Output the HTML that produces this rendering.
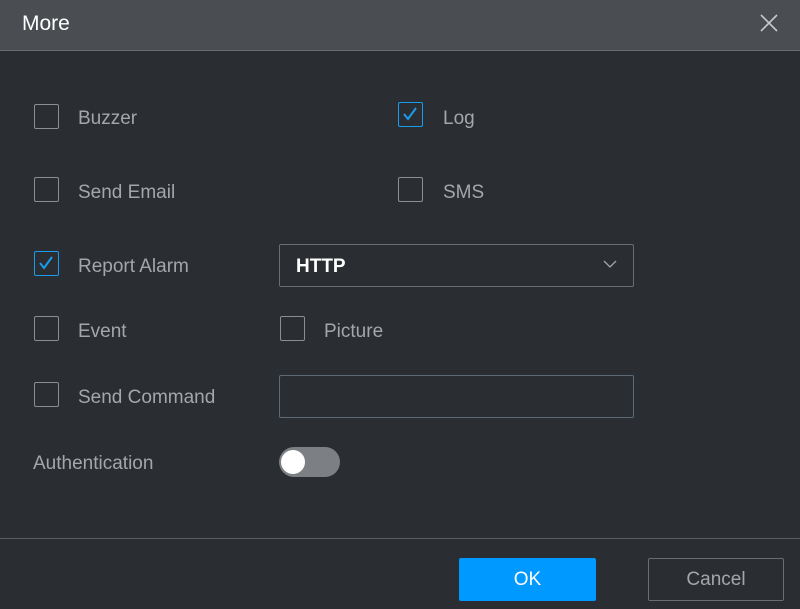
<!DOCTYPE html>
<html><head><style>
*{margin:0;padding:0;box-sizing:border-box}
body{width:800px;height:609px;background:#2a2d32;font-family:"Liberation Sans",sans-serif;position:relative;overflow:hidden;color:#a3a6aa}
.hdr{position:absolute;left:0;top:0;width:800px;height:51px;background:#4a4d52;border-bottom:1px solid #6a6d72}
.hdr .t{position:absolute;left:22px;top:12px;font-size:21px;color:#fff}
.cb{position:absolute;width:25px;height:25px;border:1.5px solid #8a8d92;border-radius:2px}
.cb.on{border-color:#1a9cec}
.cb.on svg{position:absolute;left:3px;top:3px}
.l{position:absolute;font-size:19px;line-height:20px;margin-top:1px}
.box{position:absolute;left:279px;width:355px;height:43px;border:1px solid #6a6d72;border-radius:2px}
.sw{position:absolute;left:279px;top:447px;width:61px;height:30px;border-radius:15px;background:#7c8084}
.sw i{position:absolute;left:2px;top:3px;width:24px;height:24px;border-radius:50%;background:#fff}
.line{position:absolute;left:0;top:538px;width:800px;height:1px;background:#5a5d62}
.btn{position:absolute;top:558px;height:43px;font-size:19px;text-align:center;line-height:43px;border-radius:2px}
</style></head><body>
<div class="hdr"><div class="t">More</div>
<svg style="position:absolute;left:759px;top:13px" width="20" height="20" viewBox="0 0 20 20"><path d="M2 2L18 18M18 2L2 18" stroke="#c8cacd" stroke-width="1.6"/></svg></div>

<div class="cb" style="left:34px;top:104px"></div><div class="l" style="left:78px;top:108px">Buzzer</div>
<div class="cb on" style="left:398px;top:102px"><svg width="16" height="16" viewBox="0 0 16 16"><path d="M2 8L6 13L14 2" fill="none" stroke="#1a9cec" stroke-width="2"/></svg></div><div class="l" style="left:443px;top:108px">Log</div>

<div class="cb" style="left:34px;top:177px"></div><div class="l" style="left:78px;top:182px">Send Email</div>
<div class="cb" style="left:398px;top:177px"></div><div class="l" style="left:443px;top:182px">SMS</div>

<div class="cb on" style="left:34px;top:251px"><svg width="16" height="16" viewBox="0 0 16 16"><path d="M2 8L6 13L14 2" fill="none" stroke="#1a9cec" stroke-width="2"/></svg></div><div class="l" style="left:78px;top:256px">Report Alarm</div>
<div class="box" style="top:244px"><div style="position:absolute;left:16px;top:11px;font-size:19px;font-weight:bold;color:#fff">HTTP</div>
<svg style="position:absolute;left:323px;top:14px" width="14" height="10" viewBox="0 0 14 10"><path d="M1 2L7 8L13 2" fill="none" stroke="#a3a6aa" stroke-width="1.3"/></svg></div>

<div class="cb" style="left:34px;top:316px"></div><div class="l" style="left:78px;top:321px">Event</div>
<div class="cb" style="left:280px;top:316px"></div><div class="l" style="left:324px;top:321px">Picture</div>

<div class="cb" style="left:34px;top:382px"></div><div class="l" style="left:78px;top:387px">Send Command</div>
<div class="box" style="top:375px;border-color:#5d6a76"></div>

<div class="l" style="left:33px;top:453px">Authentication</div>
<div class="sw"><i></i></div>

<div class="line"></div>
<div class="btn" style="left:459px;width:137px;background:#0099ff;color:#fff">OK</div>
<div class="btn" style="left:648px;width:136px;border:1px solid #6a6d72;color:#a3a6aa;line-height:42px">Cancel</div>
</body></html>
